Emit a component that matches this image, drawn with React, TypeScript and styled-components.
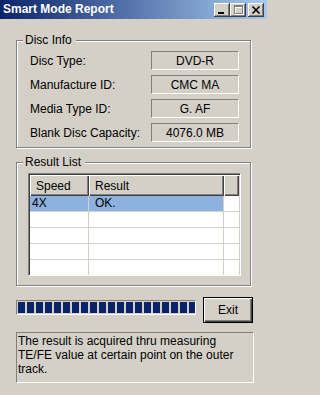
import React from 'react'
import styled, { createGlobalStyle } from 'styled-components'

const discInfo = [
  { label: 'Disc Type:', value: 'DVD-R' },
  { label: 'Manufacture ID:', value: 'CMC MA' },
  { label: 'Media Type ID:', value: 'G. AF' },
  { label: 'Blank Disc Capacity:', value: '4076.0 MB' },
]

const results = [
  { speed: '4X', result: 'OK.' },
  { speed: '', result: '' },
  { speed: '', result: '' },
  { speed: '', result: '' },
  { speed: '', result: '' },
]

const App = () => {
  return (
    <StyledWindow>
      <GlobalStyle />
      <TitleBar>
        <Title>Smart Mode Report</Title>
        <CaptionButtons>
          <CaptionButton>
            <svg width="16" height="14" viewBox="0 0 16 14">
              <rect x="4" y="9" width="6" height="2" fill="#000" />
            </svg>
          </CaptionButton>
          <CaptionButton>
            <svg width="16" height="14" viewBox="0 0 16 14">
              <path d="M4 2h9v9H4z M5 4h7v6H5z" fillRule="evenodd" fill="#fff" transform="translate(1 1)" />
              <path d="M4 2h9v9H4z M5 4h7v6H5z" fillRule="evenodd" fill="#808080" />
            </svg>
          </CaptionButton>
          <CaptionButton $gap>
            <svg width="16" height="14" viewBox="0 0 16 14">
              <path d="M4.5 3.5L11.5 10.5M11.5 3.5L4.5 10.5" stroke="#000" strokeWidth="1.7" />
            </svg>
          </CaptionButton>
        </CaptionButtons>
      </TitleBar>

      <Content>
        <GroupBox $top={21} $pad="10px 11px 5px 13px">
          <Legend>Disc Info</Legend>
          <InfoList>
            {discInfo.map(item => (
              <InfoRow key={item.label}>
                <span>{item.label}</span>
                <ValueBox>{item.value}</ValueBox>
              </InfoRow>
            ))}
          </InfoList>
        </GroupBox>

        <GroupBox $top={14} $pad="10px 9px 9px 11px">
          <Legend>Result List</Legend>
          <ListView>
            <HeaderRow>
              <HeaderCell>Speed</HeaderCell>
              <HeaderCell>Result</HeaderCell>
              <HeaderCell />
            </HeaderRow>
            {results.map((row, i) => (
              <DataRow key={i}>
                <DataCell $selected={i === 0} $indent={2}>{row.speed}</DataCell>
                <DataCell $selected={i === 0} $indent={6}>{row.result}</DataCell>
                <DataCell $last />
              </DataRow>
            ))}
          </ListView>
        </GroupBox>

        <ActionRow>
          <ProgressBar>
            {Array.from({ length: 20 }).map((_, i) => (
              <ProgressBlock key={i} />
            ))}
          </ProgressBar>
          <ExitButton>Exit</ExitButton>
        </ActionRow>

        <NoteBox>
          The result is acquired thru measuring
          <br />
          TE/FE value at certain point on the outer
          <br />
          track.
        </NoteBox>
      </Content>
    </StyledWindow>
  )
}

const GlobalStyle = createGlobalStyle`
  html, body {
    margin: 0;
    padding: 0;
    background: #d4d0c8;
  }
  body {
    font-family: "Liberation Sans", Arial, sans-serif;
    font-size: 12px;
    color: #000;
  }
  * {
    box-sizing: border-box;
  }
`

const StyledWindow = styled.div`
  width: 267px;
  height: 395px;
  background: #d4d0c8;
  overflow: hidden;
  display: flex;
  flex-direction: column;
`

const TitleBar = styled.div`
  height: 19px;
  display: flex;
  align-items: center;
  padding: 0 3px 0 3px;
  background: linear-gradient(to right, #0a246a, #a6caf0);
`

const Title = styled.div`
  flex: 1;
  color: #fff;
  font-weight: bold;
  font-size: 12px;
  line-height: 19px;
  white-space: nowrap;
`

const CaptionButtons = styled.div`
  display: flex;
  align-items: center;
`

const CaptionButton = styled.div<{ $gap?: boolean }>`
  width: 16px;
  height: 14px;
  margin-left: ${p => (p.$gap ? '2px' : '0')};
  background: #d4d0c8;
  box-shadow: inset -1px -1px 0 #404040, inset 1px 1px 0 #fff, inset -2px -2px 0 #808080;
  svg {
    display: block;
  }
`

const Content = styled.div`
  display: flex;
  flex-direction: column;
  padding-left: 16px;
`

const GroupBox = styled.div<{ $top: number; $pad: string }>`
  position: relative;
  width: 235px;
  margin-top: ${p => p.$top}px;
  padding: ${p => p.$pad};
  border: 1px solid #808080;
  box-shadow: inset 1px 1px 0 #fff, 1px 1px 0 #fff;
`

const Legend = styled.span`
  position: absolute;
  top: -8px;
  left: 6px;
  padding: 0 4px 0 2px;
  line-height: 14px;
  background: #d4d0c8;
`

const InfoList = styled.div`
  display: flex;
  flex-direction: column;
  gap: 5px;
`

const InfoRow = styled.div`
  display: flex;
  align-items: center;
  justify-content: space-between;
  height: 19px;
`

const ValueBox = styled.div`
  width: 88px;
  height: 19px;
  display: flex;
  align-items: center;
  justify-content: center;
  border-top: 1px solid #808080;
  border-left: 1px solid #808080;
  border-bottom: 1px solid #fff;
  border-right: 1px solid #fff;
`

const ListView = styled.div`
  width: 213px;
  height: 103px;
  background: #fff;
  border-top: 1px solid #808080;
  border-left: 1px solid #808080;
  border-bottom: 1px solid #fff;
  border-right: 1px solid #fff;
  box-shadow: inset 1px 1px 0 #404040, inset -1px -1px 0 #d4d0c8;
  padding: 1px;
  overflow: hidden;
`

const HeaderRow = styled.div`
  display: grid;
  grid-template-columns: 59px 135px 1fr;
  height: 21px;
`

const HeaderCell = styled.div`
  display: flex;
  align-items: center;
  padding-left: 6px;
  background: #d4d0c8;
  box-shadow: inset 1px 1px 0 #fff, inset -1px -1px 0 #404040, inset -2px -2px 0 #808080;
`

const DataRow = styled.div`
  display: grid;
  grid-template-columns: 59px 135px 1fr;
  height: 16px;
`

const DataCell = styled.div<{ $selected?: boolean; $indent?: number; $last?: boolean }>`
  display: flex;
  align-items: center;
  padding-left: ${p => p.$indent ?? 0}px;
  background: ${p => (p.$selected ? '#8db2e0' : '#fff')};
  border-bottom: 1px solid #d4d0c8;
  border-right: ${p => (p.$last ? 'none' : '1px solid #d4d0c8')};
  line-height: 15px;
`

const ActionRow = styled.div`
  display: flex;
  align-items: flex-start;
  justify-content: space-between;
  width: 237px;
  margin-top: 11px;
`

const ProgressBar = styled.div`
  margin-top: 3px;
  width: 180px;
  height: 15px;
  display: flex;
  gap: 2px;
  padding: 1px;
  overflow: hidden;
  border-top: 1px solid #808080;
  border-left: 1px solid #808080;
  border-bottom: 1px solid #fff;
  border-right: 1px solid #fff;
`

const ProgressBlock = styled.div`
  flex-shrink: 0;
  width: 7px;
  height: 11px;
  background: #0a246a;
`

const ExitButton = styled.button`
  width: 50px;
  height: 26px;
  padding: 0;
  border: 1px solid #000;
  background: #d4d0c8;
  box-shadow: inset 1px 1px 0 #fff, inset -1px -1px 0 #404040, inset -2px -2px 0 #808080;
  font-family: "Liberation Sans", Arial, sans-serif;
  font-size: 12px;
  color: #000;
`

const NoteBox = styled.div`
  margin-top: 9px;
  width: 238px;
  height: 51px;
  padding: 1px 1px;
  line-height: 14px;
  border-top: 1px solid #808080;
  border-left: 1px solid #808080;
  border-bottom: 1px solid #fff;
  border-right: 1px solid #fff;
`

export default App
